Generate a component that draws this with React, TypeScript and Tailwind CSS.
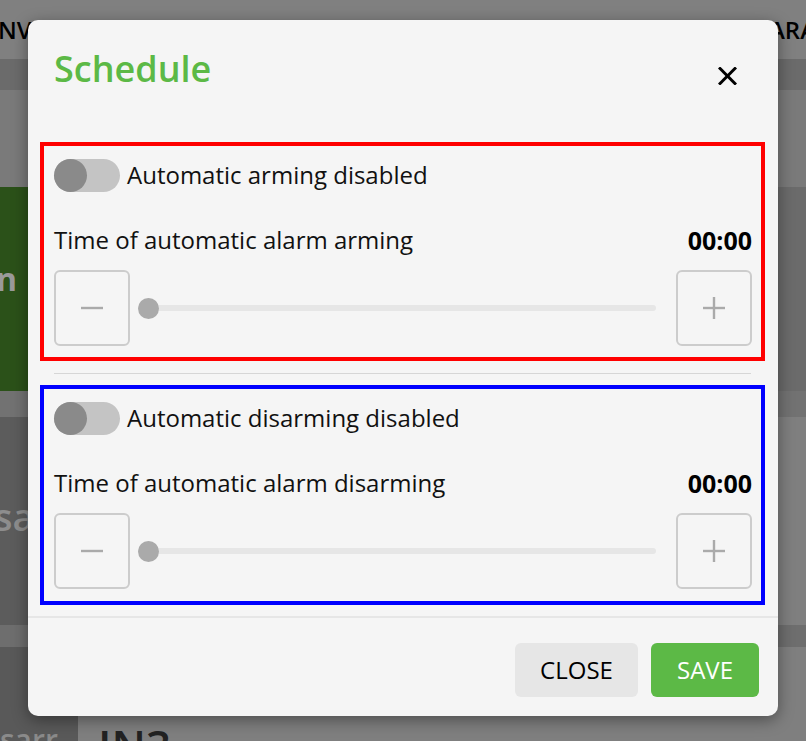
import React from "react";

const font = { fontFamily: '"Segoe UI", "Open Sans", "Noto Sans", sans-serif' };

function Toggle() {
  return (
    <div className="relative w-[66px] h-[33px] rounded-full bg-[#c4c4c4] shrink-0">
      <div className="absolute left-0 top-0 w-[33px] h-[33px] rounded-full bg-[#8a8a8a]" />
    </div>
  );
}

function StepButton({ plus }: { plus?: boolean }) {
  return (
    <div className="w-[76px] h-[76px] shrink-0 rounded-[6px] border-2 border-[#cccccc] flex items-center justify-center">
      <svg width="24" height="24" viewBox="0 0 24 24">
        <line x1="1" y1="12" x2="23" y2="12" stroke="#aaaaaa" strokeWidth="2.4" />
        {plus && <line x1="12" y1="1" x2="12" y2="23" stroke="#aaaaaa" strokeWidth="2.4" />}
      </svg>
    </div>
  );
}

function Section({ boxClass, title, label }: { boxClass: string; title: string; label: string }) {
  return (
    <div className={`border-4 ${boxClass} pl-[10px] pr-[9px] pt-[11px]`}>
      <div className="flex items-center gap-[7px] h-[36px]">
        <Toggle />
        <span className="text-[24px] text-[#111] leading-none">{title}</span>
      </div>
      <div className="flex items-center justify-between mt-[32px] h-[30px]">
        <span className="text-[24px] text-[#111] leading-none">{label}</span>
        <span className="text-[25px] font-bold text-black leading-none">00:00</span>
      </div>
      <div className="flex items-center mt-[15px]">
        <StepButton />
        <div className="relative flex-1 ml-[8px] mr-[20px] h-[21px] flex items-center">
          <div className="w-full h-[6px] rounded-full bg-[#e6e6e6]" />
          <div className="absolute left-0 top-0 w-[21px] h-[21px] rounded-full bg-[#aaaaaa]" />
        </div>
        <StepButton plus />
      </div>
    </div>
  );
}

export default function App() {
  return (
    <div className="relative w-[806px] h-[741px] overflow-hidden bg-[#7f7f7f]" style={font}>
      {/* backdrop content */}
      <div className="absolute inset-0 flex flex-col">
        <div className="h-[59px] bg-[#808080] flex items-center justify-between text-[24px] text-black font-semibold">
          <span className="-ml-[2px]">NV</span>
          <span className="-mr-[10px]">ARA</span>
        </div>
        <div className="h-[31px] bg-[#6b6b6b]" />
        <div className="h-[97px] bg-[#7a7a7a]" />
        <div className="h-[204px] flex">
          <div className="w-[60px] bg-[#2b5119] flex items-center text-[32px] font-bold text-[#9a9a9a] pl-0">
            <span className="-ml-[4px] mt-[-20px]">n</span>
          </div>
          <div className="flex-1 bg-[#7a7a7a]" />
          <div className="w-[60px] bg-[#6b6b6b]" />
        </div>
        <div className="h-[26px] bg-[#727272]" />
        <div className="h-[208px] flex">
          <div className="w-[60px] bg-[#5c5c5c] flex items-center text-[38px] font-semibold text-[#8d8d8d]">
            <span className="-ml-[6px] -mt-[10px]">sa</span>
          </div>
          <div className="flex-1 bg-[#7a7a7a]" />
          <div className="w-[60px] bg-[#7f7f7f]" />
        </div>
        <div className="h-[22px] bg-[#6e6e6e]" />
        <div className="flex-1 flex">
          <div className="w-[78px] bg-[#595959] relative">
            <span className="absolute left-0 top-[78px] text-[30px] font-semibold text-[#8a8a8a] leading-none">sarr</span>
          </div>
          <div className="flex-1 bg-[#7f7f7f] relative">
            <span className="absolute left-[20px] top-[76px] text-[44px] font-semibold text-[#222] leading-none">IN3</span>
          </div>
        </div>
      </div>

      {/* modal */}
      <div className="absolute left-[28px] top-[20px] w-[750px] h-[696px] rounded-[10px] bg-[#f5f5f5] shadow-[0_4px_16px_rgba(0,0,0,0.4)] flex flex-col">
        <div className="flex items-start justify-between pl-[26px] pr-[41px] h-[122px]">
          <span className="mt-[31px] text-[36px] font-semibold text-[#5cb946] leading-none">Schedule</span>
          <svg className="mt-[47px]" width="19" height="18" viewBox="0 0 19 18" aria-label="close">
            <line x1="1" y1="0.5" x2="18" y2="17.5" stroke="#000" strokeWidth="3" />
            <line x1="18" y1="0.5" x2="1" y2="17.5" stroke="#000" strokeWidth="3" />
          </svg>
        </div>
        <div className="pr-[13px] pl-[12px]">
          <Section boxClass="border-[#ff0000] pb-[11px]" title="Automatic arming disabled" label="Time of automatic alarm arming" />
          <div className="mx-[14px] mt-[12px] mb-[11px] h-px bg-[#d6d6d6]" />
          <Section boxClass="border-[#0000ff] pb-[12px]" title="Automatic disarming disabled" label="Time of automatic alarm disarming" />
        </div>
        <div className="mt-[11px] h-[2px] bg-[#e6e6e6]" />
        <div className="flex justify-end gap-[13px] pr-[19px] pt-[25px]">
          <button className="w-[123px] h-[54px] rounded-[6px] bg-[#e6e6e6] text-[24px] text-black">CLOSE</button>
          <button className="w-[108px] h-[54px] rounded-[6px] bg-[#5cb946] text-[24px] text-white">SAVE</button>
        </div>
      </div>
    </div>
  );
}
